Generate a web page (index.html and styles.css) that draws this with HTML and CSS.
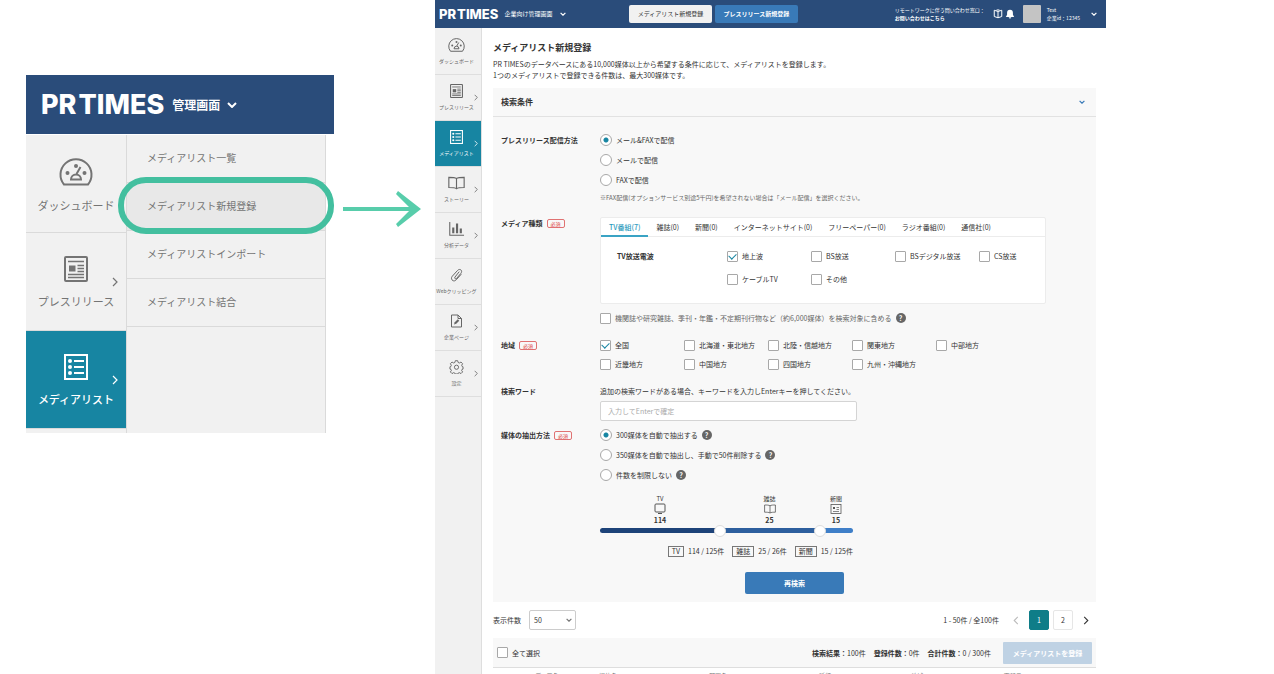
FILE: index.html
```html
<!DOCTYPE html>
<html lang="ja">
<head>
<meta charset="utf-8">
<title>メディアリスト新規登録</title>
<link rel="stylesheet" href="styles.css">
</head>
<body>
<svg class="defs" aria-hidden="true">
  <symbol id="i-dash" viewBox="0 0 34 28"><g fill="none" stroke="currentColor" stroke-width="2"><path d="M5 26.500A15.500 15.500 0 1 1 29 26.500Z"/><path d="M12 21.500a5 5 0 0 1 10 0ZM17.500 16l4-7"/></g><g fill="currentColor"><circle cx="17" cy="8" r="2"/><circle cx="8.500" cy="15" r="2"/><circle cx="25.500" cy="15" r="2"/></g></symbol>
  <symbol id="i-news" viewBox="0 0 24 26"><rect x="1" y="1" width="22" height="24" rx="1" fill="none" stroke="currentColor" stroke-width="2"/><path d="M4 5.500h16M4 18.500h16M4 21.500h16M13.500 9.500H20M13.500 12.500H20M13.500 15.500H20" stroke="currentColor" stroke-width="1.600"/><path d="M5 9.500h6.500v6H5z" fill="currentColor"/></symbol>
  <symbol id="i-list" viewBox="0 0 24 26"><rect x="1" y="1" width="22" height="24" fill="none" stroke="currentColor" stroke-width="2"/><path d="M10 7h10M10 13h10M10 19h10" stroke="currentColor" stroke-width="2"/><g fill="currentColor"><circle cx="6" cy="7" r="2"/><circle cx="6" cy="13" r="2"/><circle cx="6" cy="19" r="2"/></g></symbol>
  <symbol id="i-book" viewBox="0 0 30 24"><path d="M15 4C12 2 7 2 1.500 2v18c5.500 0 10.500 0 13.500 2 3-2 8-2 13.500-2V2C23 2 18 2 15 4Zm0 0v18" fill="none" stroke="currentColor" stroke-width="2"/></symbol>
  <symbol id="i-chart" viewBox="0 0 28 26"><path d="M1.500 0v24.500H28" fill="none" stroke="currentColor" stroke-width="2"/><path d="M6 10h4v11H6zM13 3h4v18h-4zM20 12h4v9h-4z" fill="currentColor"/></symbol>
  <symbol id="i-clip" viewBox="0 0 26 28"><path d="M18 8 10 18c-2 2.500 1 5 3 3L21.500 11c5-6-2-11-6.500-6L4.500 16.500c-5 6 3 13 8 7L22 13" fill="none" stroke="currentColor" stroke-width="2" stroke-linecap="round"/></symbol>
  <symbol id="i-page" viewBox="0 0 24 28"><path d="M2 2h13l7 7v17H2ZM15 2v7h7" fill="none" stroke="currentColor" stroke-width="2"/><path d="m7 21 1.500-4.500 6-6 3 3-6 6Z" fill="currentColor"/></symbol>
  <symbol id="i-gear" viewBox="0 0 30 30"><g fill="none" stroke="currentColor" stroke-width="2" stroke-linejoin="round"><path d="M12.500 1.500h5l1 3.800 2.700 1.100 3.400-2 3.500 3.500-2 3.400 1.100 2.700 1.800.5v5l-2.100.6-1 2.100 2.200 3.400-3.500 3.500-3.400-2-2.700 1.100-1 1.800h-5l-1-1.800-2.700-1.100-3.400 2-3.500-3.500 2.200-3.400-1-2.100-2.100-.6v-5l1.800-.5 1.100-2.700-2-3.400 3.500-3.500 3.400 2 2.700-1.100Z"/><circle cx="15" cy="15.500" r="4.500"/></g></symbol>
  <symbol id="i-right" viewBox="0 0 6 10"><path d="m1 1 4 4-4 4" fill="none" stroke="currentColor" stroke-width="1.200"/></symbol>
  <symbol id="i-left" viewBox="0 0 6 10"><path d="M5 1 1 5l4 4" fill="none" stroke="currentColor" stroke-width="1.200"/></symbol>
  <symbol id="i-down" viewBox="0 0 10 6"><path d="m1 1 4 4 4-4" fill="none" stroke="currentColor" stroke-width="2"/></symbol>
  <symbol id="i-tv" viewBox="0 0 12 12"><rect x="1" y="1" width="10" height="8" rx="1" fill="none" stroke="currentColor"/><path d="M4 10.500h4" stroke="currentColor"/></symbol>
  <symbol id="i-card" viewBox="0 0 12 12"><rect x="1" y="1.500" width="10" height="9" fill="none" stroke="currentColor" stroke-width=".8"/><path d="M3 4h2v2H3z" fill="currentColor"/><path d="M6.500 4.500H9M6.500 6.500H9M3 8.500h6" stroke="currentColor" stroke-width=".7"/></symbol>
  <symbol id="i-guide" viewBox="0 0 12 12"><path d="M6 3 1.500 1.500V9L6 10.500 10.500 9V1.500ZM6 3v7.500M4 1.500 6 1l2 .5" fill="none" stroke="currentColor" stroke-width="1.200"/></symbol>
  <symbol id="i-bell" viewBox="0 0 12 12"><path d="M6 1a3.500 3.500 0 0 1 3.500 3.500V7L11 9.500H1L2.500 7V4.500A3.500 3.500 0 0 1 6 1ZM4.500 10h3a1.500 1.500 0 0 1-3 0Z" fill="currentColor"/></symbol>
</svg>

<div class="stage">
  <section class="closeup">
    <header class="closeup-head">
      <div class="logo logo-large"><span>PR</span><span>TIMES</span></div>
      <button class="plain closeup-switch">管理画面<svg><use href="#i-down"/></svg></button>
    </header>
    <div class="closeup-body">
      <nav class="big-nav">
        <a href="#"><svg class="wide"><use href="#i-dash"/></svg><span>ダッシュボード</span></a>
        <a href="#"><svg><use href="#i-news"/></svg><span>プレスリリース</span><svg class="more"><use href="#i-right"/></svg></a>
        <a href="#" class="on"><svg><use href="#i-list"/></svg><span>メディアリスト</span><svg class="more"><use href="#i-right"/></svg></a>
      </nav>
      <nav class="submenu">
        <a href="#">メディアリスト一覧</a>
        <a href="#" class="picked">メディアリスト新規登録</a>
        <a href="#">メディアリストインポート</a>
        <a href="#">メディアリスト結合</a>
      </nav>
    </div>
  </section>

  <div class="arrow"><svg viewBox="0 0 78 38"><path d="M0 19h74" stroke="currentColor" stroke-width="4"/><path d="M55 1 78 19 55 37l-2-3 15-15L53 4Z" fill="currentColor"/></svg></div>

  <section class="app">
    <header class="app-head">
      <div class="head-left">
        <div class="logo"><span>PR</span><span>TIMES</span></div>
        <button class="plain">企業向け管理画面<svg class="chev"><use href="#i-down"/></svg></button>
      </div>
      <div class="head-mid">
        <button class="head-btn">メディアリスト新規登録</button>
        <button class="head-btn primary">プレスリリース新規登録</button>
      </div>
      <div class="head-right">
        <p class="contact">リモートワークに伴う問い合わせ窓口：<br><a href="#">お問い合わせはこちら</a></p>
        <div class="head-icons"><svg><use href="#i-guide"/></svg><svg><use href="#i-bell"/></svg></div>
        <div class="user"><span class="avatar"></span><p>Test<br>企業id：12345</p></div>
        <svg class="chev"><use href="#i-down"/></svg>
      </div>
    </header>

    <div class="app-body">
      <nav class="side">
        <a href="#"><svg><use href="#i-dash"/></svg><span>ダッシュボード</span></a>
        <a href="#"><svg><use href="#i-news"/></svg><span>プレスリリース</span><svg class="more"><use href="#i-right"/></svg></a>
        <a href="#" class="on"><svg><use href="#i-list"/></svg><span>メディアリスト</span><svg class="more"><use href="#i-right"/></svg></a>
        <a href="#"><svg><use href="#i-book"/></svg><span>ストーリー</span><svg class="more"><use href="#i-right"/></svg></a>
        <a href="#"><svg><use href="#i-chart"/></svg><span>分析データ</span><svg class="more"><use href="#i-right"/></svg></a>
        <a href="#"><svg><use href="#i-clip"/></svg><span>Webクリッピング</span></a>
        <a href="#"><svg><use href="#i-page"/></svg><span>企業ページ</span><svg class="more"><use href="#i-right"/></svg></a>
        <a href="#"><svg><use href="#i-gear"/></svg><span>設定</span><svg class="more"><use href="#i-right"/></svg></a>
      </nav>

      <main class="main">
        <h1>メディアリスト新規登録</h1>
        <p class="lead">PR TIMESのデータベースにある10,000媒体以上から希望する条件に応じて、メディアリストを登録します。<br>1つのメディアリストで登録できる件数は、最大300媒体です。</p>

        <form class="panel">
          <div class="panel-head"><h2>検索条件</h2><svg class="chev"><use href="#i-down"/></svg></div>
          <div class="panel-body">
            <div class="row">
              <h3>プレスリリース配信方法</h3>
              <div>
                <div class="stack">
                  <label><input type="radio" name="send" checked>メール&amp;FAXで配信</label>
                  <label><input type="radio" name="send">メールで配信</label>
                  <label><input type="radio" name="send">FAXで配信</label>
                </div>
                <p class="note">※FAX配信(オプションサービス別途5千円)を希望されない場合は「メール配信」を選択ください。</p>
              </div>
            </div>

            <div class="row">
              <h3>メディア種類<em>必須</em></h3>
              <div>
                <div class="tabbox">
                  <div class="tabs">
                    <button type="button" class="on">TV番組(7)</button><button type="button">雑誌(0)</button><button type="button">新聞(0)</button><button type="button">インターネットサイト(0)</button><button type="button">フリーペーパー(0)</button><button type="button">ラジオ番組(0)</button><button type="button">通信社(0)</button>
                  </div>
                  <div class="tabpane">
                    <h4>TV放送電波</h4>
                    <div class="checks four">
                      <label><input type="checkbox" checked>地上波</label>
                      <label><input type="checkbox">BS放送</label>
                      <label><input type="checkbox">BSデジタル放送</label>
                      <label><input type="checkbox">CS放送</label>
                      <label><input type="checkbox">ケーブルTV</label>
                      <label><input type="checkbox">その他</label>
                    </div>
                  </div>
                </div>
                <div class="extra"><label><input type="checkbox">機関誌や研究雑誌、季刊・年鑑・不定期刊行物など（約6,000媒体）を検索対象に含める</label><button type="button" class="help">?</button></div>
              </div>
            </div>

            <div class="row">
              <h3>地域<em>必須</em></h3>
              <div class="checks five">
                <label><input type="checkbox" checked>全国</label>
                <label><input type="checkbox">北海道・東北地方</label>
                <label><input type="checkbox">北陸・信越地方</label>
                <label><input type="checkbox">関東地方</label>
                <label><input type="checkbox">中部地方</label>
                <label><input type="checkbox">近畿地方</label>
                <label><input type="checkbox">中国地方</label>
                <label><input type="checkbox">四国地方</label>
                <label><input type="checkbox">九州・沖縄地方</label>
              </div>
            </div>

            <div class="row">
              <h3>検索ワード</h3>
              <div class="keyword">
                <label for="kw">追加の検索ワードがある場合、キーワードを入力しEnterキーを押してください。</label>
                <input id="kw" type="text" placeholder="入力してEnterで確定">
              </div>
            </div>

            <div class="row close">
              <h3>媒体の抽出方法<em>必須</em></h3>
              <div>
                <div class="stack">
                  <div><label><input type="radio" name="pick" checked>300媒体を自動で抽出する</label><button type="button" class="help">?</button></div>
                  <div><label><input type="radio" name="pick">350媒体を自動で抽出し、手動で50件削除する</label><button type="button" class="help">?</button></div>
                  <div><label><input type="radio" name="pick">件数を制限しない</label><button type="button" class="help">?</button></div>
                </div>
                <div class="balance">
                  <div class="segments">
                    <div>TV<svg><use href="#i-tv"/></svg><b>114</b></div>
                    <div>雑誌<svg><use href="#i-book"/></svg><b>25</b></div>
                    <div>新聞<svg><use href="#i-card"/></svg><b>15</b></div>
                  </div>
                  <div class="slider">
                    <input type="range" aria-label="TVと雑誌の配分" min="0" max="1000" value="475">
                    <input type="range" aria-label="雑誌と新聞の配分" min="0" max="1000" value="886">
                  </div>
                  <div class="counts">
                    <span><i>TV</i>114 / 125件</span><span><i>雑誌</i>25 / 26件</span><span><i>新聞</i>15 / 125件</span>
                  </div>
                </div>
              </div>
            </div>
            <button type="button" class="search">再検索</button>
          </div>
        </form>

        <div class="pager">
          <label for="per">表示件数</label>
          <div class="select"><select id="per"><option>50</option><option>100</option></select><svg class="chev"><use href="#i-down"/></svg></div>
          <span class="range">1 - 50件 / 全100件</span>
          <nav class="pages">
            <button class="step off" aria-label="前へ"><svg><use href="#i-left"/></svg></button>
            <button class="page on">1</button>
            <button class="page">2</button>
            <button class="step" aria-label="次へ"><svg><use href="#i-right"/></svg></button>
          </nav>
        </div>

        <div class="bulk">
          <label><input type="checkbox">全て選択</label>
          <p><b>検索結果：</b>100件</p><p><b>登録件数：</b>0件</p><p><b>合計件数：</b>0 / 300件</p>
          <button disabled>メディアリストを登録</button>
        </div>
        <table class="list">
          <colgroup><col class="c-rank"><col class="c-name"><col class="c-wide"><col class="c-wide"><col><col><col></colgroup>
          <thead><tr><th></th><th>メディア名</th><th>媒体名</th><th>部署名</th><th>種類</th><th>地域</th><th>更新日</th></tr></thead>
        </table>
      </main>
    </div>
  </section>
</div>
</body>
</html>
```
FILE: styles.css
```css
* { box-sizing: border-box; }
body, h1, h2, h3, h4, p { margin: 0; }
body {
  height: 100vh;
  overflow: hidden;
  background: #fff;
  color: #333;
  font: 7px/12px "Noto Sans CJK JP", "Noto Sans", sans-serif;
}
a { color: inherit; text-decoration: none; }
button, input, select { font: inherit; color: inherit; margin: 0; }
button { padding: 0; border: 0; background: none; white-space: nowrap; }
em, i { font-style: normal; }
svg { display: block; flex: none; }
.defs { position: absolute; width: 0; height: 0; }

.stage {
  display: grid;
  grid-template-columns: 308fr 101fr 671fr;
  align-items: start;
  padding: 0 168px 0 26px;
}
.logo {
  display: flex;
  gap: 1px;
  font: 800 13px/14px Inter, sans-serif;
  color: #fff;
}
.logo-large { gap: 2px; font-size: 27px; line-height: 28px; }
.plain { display: flex; align-items: center; color: #fff; }
.chev { width: 6px; height: 4px; }

/* Enlarged menu */
.closeup { margin-top: 75px; }
.closeup-head {
  display: flex;
  align-items: center;
  gap: 8px;
  height: 59px;
  padding-left: 15px;
  background: #2a4c7a;
}
.closeup-switch { gap: 7px; font-size: 12px; font-weight: 700; }
.closeup-switch svg { width: 10px; height: 6px; }
.closeup-body {
  display: grid;
  grid-template-columns: 101px 1fr;
  height: 298px;
  margin: 1px 8px 0 0;
  background: #f1f1f1;
  border-right: 1px solid #dadada;
}
.big-nav { border-right: 1px solid #dadada; color: #747474; }
.big-nav a {
  position: relative;
  display: flex;
  flex-direction: column;
  align-items: center;
  gap: 11px;
  height: 98px;
  padding-top: 23px;
  border-bottom: 1px solid #dadada;
  font-size: 11px;
  line-height: 16px;
  white-space: nowrap;
}
.big-nav svg { width: 24px; height: 26px; }
.big-nav svg.wide { width: 34px; height: 28px; }
.big-nav .on { background: #1785a2; color: #fff; font-weight: 500; }
.big-nav .more { position: absolute; right: 8px; top: 44px; width: 6px; height: 10px; }
.submenu { font-size: 10px; color: #747474; }
.submenu a {
  position: relative;
  display: flex;
  align-items: center;
  height: 48px;
  padding: 0 0 2px 20px;
  border-bottom: 1px solid #dadada;
}
.submenu .picked { background: #e8e8e8; }
.picked::after {
  content: "";
  position: absolute;
  inset: -6px -9px -4px -9px;
  border: 6px solid #43bf9f;
  border-radius: 28px;
}
.arrow { margin-top: 190px; padding: 0 14px 0 9px; color: #58cdab; }
.arrow svg { width: 100%; }

/* Application header */
.app-head {
  display: flex;
  align-items: center;
  height: 28px;
  background: #2a4c7a;
  color: #fff;
  font-size: 6px;
  white-space: nowrap;
}
.head-left { display: flex; align-items: center; gap: 6px; flex: 195 1 0; padding-left: 4px; }
.head-left .plain { gap: 8px; }
.head-mid { display: flex; gap: 3px; }
.head-btn {
  height: 18px;
  min-width: 83px;
  border-radius: 2px;
  background: #f1f1f1;
  color: #333;
}
.head-btn.primary { background: #397ab8; color: #fff; font-weight: 700; }
.head-right {
  display: flex;
  align-items: center;
  justify-content: flex-end;
  flex: 307 1 0;
  gap: 8px;
  padding-right: 9px;
  font-size: 5px;
  line-height: 8px;
}
.contact a { font-weight: 700; }
.head-icons, .user { display: flex; align-items: center; gap: 2px; }
.head-icons svg { width: 10px; height: 10px; }
.user { gap: 6px; margin-right: 3px; }
.avatar { width: 18px; height: 18px; border-radius: 1px; background: #c4c4c4; }

.app-body { display: grid; grid-template-columns: 47px 1fr; }
.side {
  min-height: 660px;
  padding-top: 1px;
  background: #f1f1f1;
  border-right: 1px solid #dedede;
  color: #666;
}
.side a {
  position: relative;
  display: flex;
  flex-direction: column;
  align-items: center;
  gap: 5px;
  height: 46px;
  padding: 9px 3px 0 0;
  border-bottom: 1px solid #dedede;
  font-size: 5px;
  line-height: 8px;
  white-space: nowrap;
}
.side svg { width: 17px; height: 14px; }
.side .on { background: #1785a2; color: #fff; }
.side .more { position: absolute; right: 3px; top: 19px; width: 4px; height: 7px; }

/* Main column */
.main { min-width: 0; padding: 12px 10px 0 11px; }
h1 { font-size: 9px; line-height: 16px; }
.lead { margin-top: 3px; line-height: 11px; }
.panel { margin-top: 7px; background: #f8f8f8; }
.panel-head {
  display: flex;
  align-items: center;
  justify-content: space-between;
  height: 29px;
  padding: 0 11px 0 8px;
  border-bottom: 1px solid #e2e2e2;
}
.panel-head .chev { color: #397ab8; }
h2 { font-size: 8px; }
h3, h4 { font-size: 7px; }
.panel-body { display: flex; flex-direction: column; gap: 15px; padding: 17px 50px 8px 8px; }
.row { display: grid; grid-template-columns: 99px minmax(0, 1fr); }
.row.close { margin-top: -7px; }
h3 { display: flex; align-items: center; gap: 4px; height: 12px; }
em {
  padding: 0 3px;
  border: 1px solid #e07272;
  border-radius: 2px;
  color: #d44;
  font-size: 5px;
  font-weight: 400;
  line-height: 7px;
}
label { display: flex; align-items: center; gap: 4px; white-space: nowrap; }
.stack { display: grid; gap: 8px; }
.stack > div, .extra { display: flex; align-items: center; gap: 4px; }
.note { margin-top: 8px; color: #666; font-size: 6px; line-height: 8px; }

input[type="radio"], input[type="checkbox"] {
  appearance: none;
  flex: none;
  width: 12px;
  height: 12px;
  border: 1px solid #a8a8a8;
  background: #fff;
}
input[type="radio"] { border-radius: 50%; }
input[type="radio"]:checked { background: radial-gradient(circle, #1785a2 0 2px, #fff 3px); }
input[type="checkbox"] { width: 11px; height: 11px; border-radius: 1px; }
input[type="checkbox"]:checked { display: grid; place-items: center; }
input[type="checkbox"]:checked::before {
  content: "";
  width: 6px;
  height: 4px;
  margin-bottom: 2px;
  border: solid #1785a2;
  border-width: 0 0 1px 1px;
  rotate: -45deg;
}
.help {
  width: 10px;
  height: 10px;
  border-radius: 50%;
  background: #666;
  color: #fff;
  font-weight: 700;
  line-height: 10px;
}
.tabbox { max-width: 447px; background: #fff; border: 1px solid #ececec; border-radius: 2px; }
.tabs { display: flex; height: 19px; border-bottom: 1px solid #ececec; }
.tabs button { padding: 0 8px; }
.tabs .on { height: 19px; border-bottom: 2px solid #3aa3c4; color: #2a9abd; font-weight: 500; }
.tabpane { display: grid; grid-template-columns: 110px 1fr; padding: 13px 0 18px 16px; }
.checks { display: grid; }
.checks label { height: 12px; }
.four { grid-template-columns: repeat(4, 84px); gap: 11px 0; }
.five { grid-template-columns: repeat(5, 84px); gap: 7px 0; }
.extra { margin-top: 8px; color: #666; }
.keyword { max-width: 257px; }
.keyword input {
  width: 100%;
  height: 20px;
  margin-top: 4px;
  padding: 0 7px;
  border: 1px solid #d4d4d4;
  border-radius: 2px;
  background: #fff;
}
.keyword input::placeholder { color: #aaa; }

/* Distribution slider */
.balance { max-width: 253px; margin-top: 13px; }
.segments { display: grid; grid-template-columns: 120fr 99fr 34fr; font-size: 6px; line-height: 9px; }
.segments div { display: flex; flex-direction: column; align-items: center; }
.segments svg { width: 12px; height: 12px; color: #555; }
.segments b { font-size: 7px; line-height: 11px; }
.slider {
  position: relative;
  height: 5px;
  margin-top: 2px;
  border-radius: 3px;
  background: linear-gradient(to right, #1d4379 0 48%, #2d5f9e 48% 87%, #3f7fc8 87%);
}
.slider input {
  appearance: none;
  position: absolute;
  inset: -4px 0;
  width: 100%;
  background: none;
  pointer-events: none;
}
.slider input::-webkit-slider-thumb {
  appearance: none;
  width: 12px;
  height: 12px;
  border: 1px solid #ddd;
  border-radius: 50%;
  background: #fff;
  pointer-events: auto;
}
.counts { display: flex; justify-content: flex-end; gap: 8px; margin-top: 12px; white-space: nowrap; }
.counts span { display: flex; align-items: center; gap: 4px; }
.counts i { padding: 0 3px; border: 1px solid #777; line-height: 9px; }
.search {
  align-self: center;
  width: 99px;
  height: 22px;
  margin-left: 42px;
  border-radius: 2px;
  background: #397ab8;
  color: #fff;
  font-weight: 700;
}

/* Results */
.pager { display: flex; align-items: center; gap: 8px; padding: 8px 1px 8px 0; }
.select { position: relative; }
select {
  appearance: none;
  width: 47px;
  height: 20px;
  padding: 0 4px;
  border: 1px solid #ccc;
  border-radius: 2px;
  background: #fff;
}
.select .chev { position: absolute; right: 4px; top: 8px; color: #777; }
.range { margin-left: auto; }
.pages { display: flex; gap: 4px; }
.step { display: grid; place-items: center; width: 10px; margin: 0 4px; }
.step svg { width: 6px; height: 9px; }
.step.off { color: #bbb; }
.page { width: 20px; height: 20px; border: 1px solid #e6e6e6; border-radius: 2px; }
.page.on { background: #0f7d88; border-color: #0f7d88; color: #fff; }
.bulk {
  display: flex;
  align-items: center;
  gap: 8px;
  height: 30px;
  padding: 0 4px;
  background: #f8f8f8;
  border-bottom: 1px solid #dedede;
  white-space: nowrap;
}
.bulk label { margin-right: auto; }
.bulk button {
  width: 89px;
  height: 22px;
  margin-left: 4px;
  border-radius: 1px;
  background: #bfd2e4;
  color: #fff;
  font-weight: 700;
}
.list { width: 100%; border-collapse: collapse; table-layout: fixed; color: #777; font-size: 6px; }
.list th { padding: 2px 0; font-weight: 400; text-align: left; }
.c-rank { width: 36px; }
.c-name { width: 70px; }
.c-wide { width: 110px; }
```
